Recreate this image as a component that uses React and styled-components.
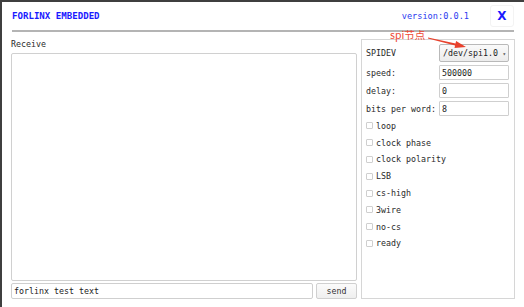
import React from "react";
import styled, { createGlobalStyle } from "styled-components";

const GlobalStyle = createGlobalStyle`
  html, body {
    margin: 0;
    padding: 0;
    background: #3f3f3f;
  }
  #root {
    padding: 2px 0 0 2px;
  }
  * {
    box-sizing: border-box;
  }
`;

const FLAGS = [
  "loop",
  "clock phase",
  "clock polarity",
  "LSB",
  "cs-high",
  "3wire",
  "no-cs",
  "ready",
];

const FIELDS = [
  { label: "speed:", value: "500000" },
  { label: "delay:", value: "0" },
  { label: "bits per word:", value: "8" },
];

export default function App() {
  return (
    <>
      <GlobalStyle />
      <Window>
        <Header>
          <Brand>FORLINX EMBEDDED</Brand>
          <HeaderRight>
            <Version>version:0.0.1</Version>
            <CloseButton>X</CloseButton>
          </HeaderRight>
        </Header>
        <Divider />
        <Body>
          <ReceiveColumn>
            <FieldLabel>Receive</FieldLabel>
            <ReceiveArea />
            <SendRow>
              <SendInput defaultValue="forlinx test text" />
              <SendButton>send</SendButton>
            </SendRow>
          </ReceiveColumn>

          <SettingsPanel>
            <SettingRow $tall>
              <RowLabel>SPIDEV</RowLabel>
              <DeviceSelect>
                <span>/dev/spi1.0</span>
                <Caret>▾</Caret>
              </DeviceSelect>
            </SettingRow>
            {FIELDS.map((f) => (
              <SettingRow key={f.label}>
                <RowLabel>{f.label}</RowLabel>
                <SmallInput defaultValue={f.value} />
              </SettingRow>
            ))}
            <FlagList>
              {FLAGS.map((name) => (
                <FlagRow key={name}>
                  <FlagBox />
                  <span>{name}</span>
                </FlagRow>
              ))}
            </FlagList>
          </SettingsPanel>
        </Body>

        {/* screenshot annotation laid over the window */}
        <AnnotationText>spi节点</AnnotationText>
        <Arrow width="42" height="16" viewBox="0 0 42 16">
          <polygon
            points="2,3.6 29.5,9.4 30.1,7 40,13 28.5,14 29.1,11.6 2,4.4"
            fill="#e8412c"
          />
        </Arrow>
      </Window>
    </>
  );
}

const Window = styled.div`
  position: relative;
  width: 522px;
  height: 305px;
  background: #ffffff;
  display: flex;
  flex-direction: column;
  font-family: "DejaVu Sans Mono", "Liberation Mono", monospace;
  color: #2a2a2a;
`;

const Header = styled.div`
  height: 28px;
  padding: 0 10px 0 10px;
  display: flex;
  align-items: center;
  justify-content: space-between;
`;

const Brand = styled.span`
  font-size: 9.1px;
  font-weight: bold;
  color: #1a1aff;
`;

const HeaderRight = styled.div`
  display: flex;
  align-items: center;
  gap: 21px;
`;

const Version = styled.span`
  font-size: 8.6px;
  color: #2b3bf0;
`;

const CloseButton = styled.span`
  width: 24px;
  height: 22px;
  display: flex;
  align-items: center;
  justify-content: center;
  font-size: 12px;
  font-weight: bold;
  color: #1a1aff;
  border: 1px solid #f3f3f3;
  border-radius: 3px;
  font-family: "DejaVu Sans", sans-serif;
`;

const Divider = styled.div`
  margin: 0 10px 0 10px;
  height: 2px;
  background: #b4b4b4;
`;

const Body = styled.div`
  flex: 1;
  display: flex;
  gap: 4px;
  padding: 7px 9px 8px 9px;
`;

const ReceiveColumn = styled.div`
  width: 346px;
  display: flex;
  flex-direction: column;
`;

const FieldLabel = styled.div`
  font-size: 8.3px;
  line-height: 10px;
  height: 10px;
  margin-bottom: 4px;
`;

const ReceiveArea = styled.div`
  flex: 1;
  border: 1px solid #d0d0d0;
  border-radius: 2px;
`;

const SendRow = styled.div`
  display: flex;
  gap: 3px;
  margin-top: 2px;
  height: 16px;
`;

const SendInput = styled.input`
  flex: 1;
  min-width: 0;
  height: 16px;
  padding: 0 2px;
  border: 1px solid #cfcfcf;
  border-radius: 2px;
  font-family: inherit;
  font-size: 8.3px;
  color: #222;
  outline: none;
`;

const SendButton = styled.button`
  width: 41px;
  height: 16px;
  padding: 0;
  border: 1px solid #d0d0d0;
  border-radius: 2px;
  background: linear-gradient(#fbfbfb, #efefef);
  font-family: inherit;
  font-size: 8.3px;
  color: #333;
`;

const SettingsPanel = styled.div`
  flex: 1;
  border: 1px solid #d6d6d6;
  padding: 4px 4px 0 4px;
  display: flex;
  flex-direction: column;
  gap: 3px;
`;

const SettingRow = styled.div`
  display: grid;
  grid-template-columns: 73px 70px;
  align-items: center;
  height: ${(p) => (p.$tall ? "18px" : "15px")};
`;

const RowLabel = styled.span`
  font-size: 8.3px;
  white-space: nowrap;
`;

const DeviceSelect = styled.div`
  height: 18px;
  border: 1px solid #b9b9b9;
  border-radius: 2px;
  background: linear-gradient(#fafafa, #ececec);
  display: flex;
  align-items: center;
  justify-content: space-between;
  padding: 0 2px 0 3px;
  font-size: 8.3px;
  color: #222;
`;

const Caret = styled.span`
  font-size: 6px;
  color: #555;
`;

const SmallInput = styled.input`
  width: 70px;
  height: 15px;
  padding: 0 2px;
  border: 1px solid #cfcfcf;
  border-radius: 1px;
  font-family: inherit;
  font-size: 8.3px;
  color: #222;
  outline: none;
`;

const FlagList = styled.div`
  display: flex;
  flex-direction: column;
  margin-top: -1.5px;
`;

const FlagRow = styled.div`
  height: 16.8px;
  display: flex;
  align-items: center;
  gap: 3px;
  font-size: 8.3px;
`;

const FlagBox = styled.span`
  width: 7px;
  height: 7px;
  border: 1px solid #cfcfcf;
  border-radius: 1px;
  background: #fff;
`;

const AnnotationText = styled.span`
  position: absolute;
  left: 388px;
  top: 27px;
  font-family: "Noto Sans CJK SC", "DejaVu Sans", sans-serif;
  font-size: 10.5px;
  line-height: 12px;
  color: #ee4a36;
`;

const Arrow = styled.svg`
  position: absolute;
  left: 424px;
  top: 32px;
`;
